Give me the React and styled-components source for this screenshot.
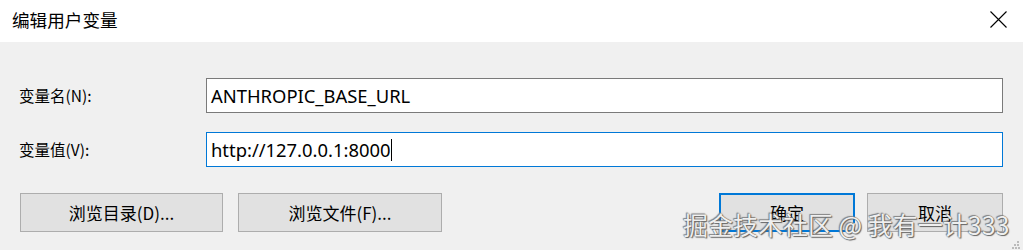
import React from 'react';
import styled, { createGlobalStyle } from 'styled-components';

const GlobalStyle = createGlobalStyle`
  html, body {
    margin: 0;
    padding: 0;
    background: #f0f0f0;
  }
  * {
    box-sizing: border-box;
  }
`;

const Window = styled.div`
  position: relative;
  width: 1023px;
  height: 250px;
  overflow: hidden;
  background: #f0f0f0;
  font-family: "Noto Sans", "Noto Sans CJK SC", sans-serif;
  color: #000;
`;

const TitleBar = styled.div`
  height: 42px;
  background: #fff;
  display: flex;
  align-items: center;
  justify-content: space-between;
  padding: 0 16px 0 12px;
`;

const Title = styled.div`
  font-family: "Noto Sans CJK SC", sans-serif;
  font-size: 17.6px;
  line-height: 1;
  margin-top: -2px;
`;

const CloseButton = styled.div`
  width: 18px;
  height: 18px;
  display: flex;
  align-items: center;
  justify-content: center;
  margin-top: -4px;
`;

const Form = styled.div`
  display: grid;
  grid-template-columns: 187px 1fr;
  row-gap: 19px;
  align-items: center;
  padding: 36px 20px 0 19px;
`;

const Label = styled.label`
  font-family: "Noto Sans CJK SC", sans-serif;
  font-size: 15.5px;
  line-height: 1;
`;

const Field = styled.div`
  height: 35px;
  background: #fff;
  border: 1px solid ${p => (p.$focused ? '#0078d7' : '#7a7a7a')};
  display: flex;
  align-items: center;
  padding-left: 4px;
  font-family: "Noto Sans", sans-serif;
  font-size: 18.4px;
  white-space: nowrap;
`;

const Caret = styled.span`
  display: inline-block;
  width: 1px;
  height: 22px;
  background: #000;
  margin-left: 1px;
`;

const ButtonRow = styled.div`
  display: flex;
  justify-content: space-between;
  padding: 26px 20px 0 20px;
`;

const ButtonGroup = styled.div`
  display: flex;
  gap: ${p => p.$gap}px;
`;

const Button = styled.div`
  width: ${p => p.$width}px;
  height: 39px;
  background: #e1e1e1;
  border: ${p => (p.$primary ? '2px solid #0078d7' : '1px solid #adadad')};
  display: flex;
  align-items: center;
  justify-content: center;
  font-family: "Noto Sans CJK SC", sans-serif;
  font-size: 17px;
  line-height: 1;
`;

const Watermark = styled.div`
  position: absolute;
  left: 683px;
  top: 209px;
  font-family: "Noto Sans CJK SC", sans-serif;
  font-size: 25px;
  line-height: 30px;
  color: rgba(255, 255, 255, 0.92);
  text-shadow: 0 0 1px #555, 1px 1px 1px #666, -1px -1px 1px #888;
  white-space: nowrap;
`;

const Grip = styled.svg`
  position: absolute;
  right: 3px;
  bottom: 1px;
`;

export default function App() {
  return (
    <>
      <GlobalStyle />
      <Window>
        <TitleBar>
          <Title>编辑用户变量</Title>
          <CloseButton>
            <svg width="17" height="17" viewBox="0 0 17 17">
              <path d="M0.5 0.5 L16.5 16.5 M16.5 0.5 L0.5 16.5" stroke="#000" strokeWidth="1.1" fill="none" />
            </svg>
          </CloseButton>
        </TitleBar>
        <Form>
          <Label>变量名(N):</Label>
          <Field>ANTHROPIC_BASE_URL</Field>
          <Label>变量值(V):</Label>
          <Field $focused>
            http://127.0.0.1:8000
            <Caret />
          </Field>
        </Form>
        <ButtonRow>
          <ButtonGroup $gap={15}>
            <Button $width={203}>浏览目录(D)...</Button>
            <Button $width={204}>浏览文件(F)...</Button>
          </ButtonGroup>
          <ButtonGroup $gap={12}>
            <Button $width={136} $primary>确定</Button>
            <Button $width={136}>取消</Button>
          </ButtonGroup>
        </ButtonRow>
        <Watermark>掘金技术社区 @ 我有一计333</Watermark>
        <Grip width="8" height="8" viewBox="0 0 8 8">
          <rect x="5" y="0" width="2" height="2" fill="#bbb" />
          <rect x="2" y="3" width="2" height="2" fill="#bbb" />
          <rect x="5" y="3" width="2" height="2" fill="#bbb" />
          <rect x="0" y="6" width="2" height="2" fill="#bbb" />
          <rect x="3" y="6" width="2" height="2" fill="#bbb" />
          <rect x="6" y="6" width="2" height="2" fill="#bbb" />
        </Grip>
      </Window>
    </>
  );
}
